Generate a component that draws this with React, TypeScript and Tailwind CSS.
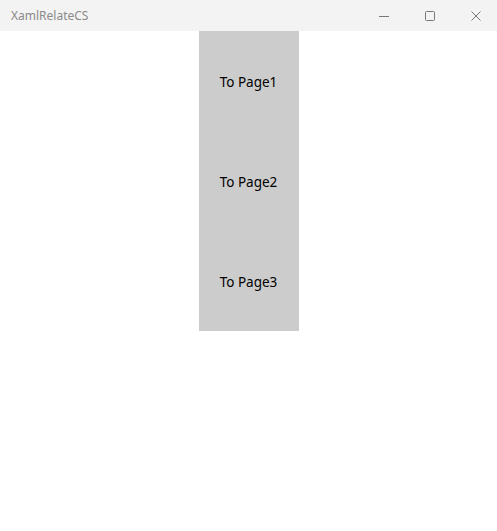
export default function App() {
  return (
    <div className="flex h-[531px] w-[497px] flex-col overflow-hidden bg-white font-['Segoe_UI','Noto_Sans','Open_Sans',sans-serif]">
      <div className="flex h-[31px] shrink-0 items-center bg-[#f3f3f3]">
        <span className="pl-[11px] text-[12px] text-[#8a8a8a]">XamlRelateCS</span>
        <div className="ml-auto mr-[-2px] flex h-full">
          <div className="flex w-[46px] items-center justify-center">
            <svg width="10" height="10" viewBox="0 0 10 10">
              <path d="M0 5.5h10" stroke="#777" strokeWidth="1" />
            </svg>
          </div>
          <div className="flex w-[46px] items-center justify-center">
            <svg width="10" height="10" viewBox="0 0 10 10">
              <rect x="0.5" y="0.5" width="9" height="9" rx="1" fill="none" stroke="#777" strokeWidth="1" />
            </svg>
          </div>
          <div className="flex w-[46px] items-center justify-center">
            <svg width="10" height="10" viewBox="0 0 10 10">
              <path d="M0.5 0.5l9 9M9.5 0.5l-9 9" stroke="#777" strokeWidth="1" />
            </svg>
          </div>
        </div>
      </div>
      <div className="flex justify-center">
        <div className="flex w-[100px] flex-col bg-[#cccccc]">
          {['To Page1', 'To Page2', 'To Page3'].map((t) => (
            <div key={t} className="flex h-[100px] items-center justify-center pt-[2px] text-[13.5px] text-black">
              {t}
            </div>
          ))}
        </div>
      </div>
    </div>
  )
}
